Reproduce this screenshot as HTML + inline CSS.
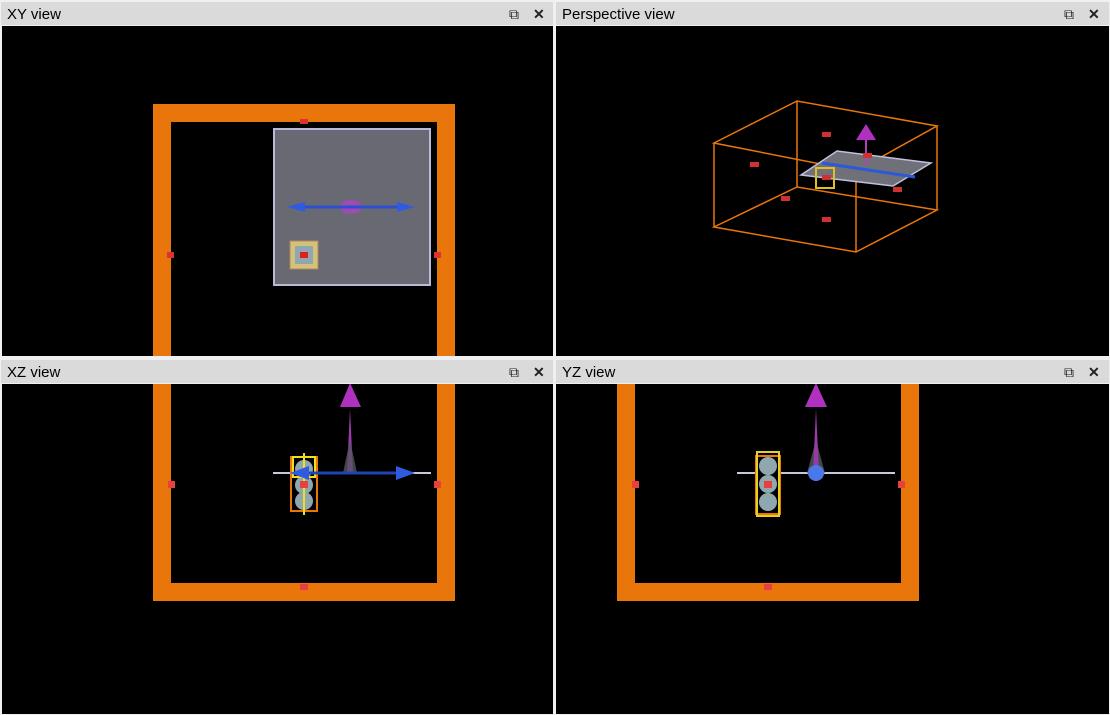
<!DOCTYPE html>
<html><head><style>
html,body{margin:0;padding:0;background:#f0f0f0;width:1110px;height:715px;overflow:hidden}
.t{position:absolute;height:24px;background:#dadada;font-family:"Liberation Sans",sans-serif;font-size:15px;line-height:25px;color:#000;padding-left:6px;box-sizing:border-box;border-top:1px solid #f0f0f0}
.i{position:absolute;top:0;font-size:14px;color:#222}
</style></head><body>
<div class="t" style="left:1px;top:1px;width:552px">XY view<span class="i" style="left:508px">&#x29C9;</span><span class="i" style="left:532px;font-weight:bold">✕</span></div>
<div class="t" style="left:556px;top:1px;width:553px">Perspective view<span class="i" style="left:508px">&#x29C9;</span><span class="i" style="left:532px;font-weight:bold">✕</span></div>
<div class="t" style="left:1px;top:359px;width:552px">XZ view<span class="i" style="left:508px">&#x29C9;</span><span class="i" style="left:532px;font-weight:bold">✕</span></div>
<div class="t" style="left:556px;top:359px;width:553px">YZ view<span class="i" style="left:508px">&#x29C9;</span><span class="i" style="left:532px;font-weight:bold">✕</span></div>
<svg style="position:absolute;left:0;top:0" width="1110" height="715">
<defs>
<clipPath id="c1"><rect x="2" y="26" width="551" height="330"/></clipPath>
<clipPath id="c2"><rect x="556" y="26" width="553" height="330"/></clipPath>
<clipPath id="c3"><rect x="2" y="384" width="551" height="330"/></clipPath>
<clipPath id="c4"><rect x="556" y="384" width="553" height="330"/></clipPath>
</defs>
<rect x="2" y="26" width="551" height="330" fill="#000"/>
<rect x="556" y="26" width="553" height="330" fill="#000"/>
<rect x="2" y="384" width="551" height="330" fill="#000"/>
<rect x="556" y="384" width="553" height="330" fill="#000"/>
<g clip-path="url(#c1)">
<path d="M153 400V104H455V400H437V122H171V400Z" fill="#e8760a"/>
<rect x="274" y="129" width="156" height="156" fill="#696974" stroke="#b9b9d8" stroke-width="2"/>
<ellipse cx="351" cy="207" rx="11" ry="7" fill="#a04bb0"/>
<line x1="295" y1="207" x2="405" y2="207" stroke="#2a4fd0" stroke-width="3"/>
<path d="M287 207l18-5v10zM415 207l-18-5v10z" fill="#2f5be0"/>
<rect x="290" y="241" width="28" height="28" fill="#d5c27a" stroke="#b0885a"/>
<rect x="295" y="246" width="18" height="18" fill="#8fa8b0"/>
<rect x="300" y="252" width="8" height="6" fill="#e02020"/>
<rect x="300" y="119" width="8" height="5" fill="#e03030"/>
<rect x="167" y="252" width="7" height="6" fill="#e03030"/>
<rect x="434" y="252" width="7" height="6" fill="#e03030"/>
</g>
<g clip-path="url(#c2)" fill="none" stroke="#e8760a" stroke-width="1.5">
<path d="M714 143L797 101L937 126L856 171ZM714 227L797 187L937 210L856 252ZM714 143V227M797 101V187M937 126V210M856 171V252"/>
<path d="M801 175L837 151L931 163L893 186Z" fill="#707078" stroke="#c0c0e0"/>
<line x1="822" y1="163" x2="915" y2="177" stroke="#2a5ad8" stroke-width="3"/>
<line x1="866" y1="140" x2="866" y2="165" stroke="#b040c0" stroke-width="2"/>
<path d="M856 140L866 124L876 140Z" fill="#b030c0" stroke="none"/>
<rect x="816" y="168" width="18" height="20" stroke="#e0c020" stroke-width="2"/>
<g fill="#d03030" stroke="none"><rect x="750" y="162" width="9" height="5"/><rect x="822" y="132" width="9" height="5"/><rect x="781" y="196" width="9" height="5"/><rect x="822" y="217" width="9" height="5"/><rect x="893" y="187" width="9" height="5"/><rect x="863" y="153" width="9" height="5"/><rect x="822" y="175" width="9" height="5"/></g>
</g>
<g clip-path="url(#c3)">
<path d="M153 370V601H455V370H437V583H171V370Z" fill="#e8760a"/>
<line x1="273" y1="473" x2="431" y2="473" stroke="#c8c8dc" stroke-width="2"/>
<path d="M347 473L350 408L353 473Z" fill="#9a3aa8"/>
<path d="M343 473L350 440L357 473Z" fill="#555560" opacity=".8"/>
<path d="M340 407L350 383L361 407Z" fill="#b030c0"/>
<rect x="291" y="457" width="26" height="54" fill="#000" stroke="#e8760a" stroke-width="2"/>
<circle cx="304" cy="469" r="9" fill="#8fa8b0"/><circle cx="304" cy="485" r="9" fill="#8fa8b0"/><circle cx="304" cy="501" r="9" fill="#8fa8b0"/>
<rect x="293" y="457" width="22" height="20" fill="none" stroke="#f0e020" stroke-width="2"/>
<line x1="304" y1="453" x2="304" y2="515" stroke="#f0e020" stroke-width="2"/>
<line x1="300" y1="473" x2="400" y2="473" stroke="#1f44b8" stroke-width="3"/>
<path d="M415 473l-19-7v14zM290 473l19-7v14z" fill="#2f5be0"/>
<g fill="#e84040"><rect x="300" y="481" width="8" height="7"/><rect x="168" y="481" width="7" height="7"/><rect x="434" y="481" width="7" height="7"/><rect x="300" y="584" width="8" height="6"/></g>
</g>
<g clip-path="url(#c4)">
<path d="M617 370V601H919V370H901V583H635V370Z" fill="#e8760a"/>
<line x1="737" y1="473" x2="895" y2="473" stroke="#c8c8dc" stroke-width="2"/>
<path d="M807 473L816 440L825 473Z" fill="#555560" opacity=".8"/>
<path d="M813 473L816 408L819 473Z" fill="#9a3aa8"/>
<path d="M805 407L816 383L827 407Z" fill="#b030c0"/>
<circle cx="816" cy="473" r="8" fill="#4a78e8"/>
<rect x="756" y="456" width="24" height="58" fill="#000" stroke="#e8760a" stroke-width="2"/>
<rect x="757" y="452" width="22" height="64" fill="none" stroke="#e8d020" stroke-width="2"/>
<circle cx="768" cy="466" r="9" fill="#8fa8b0"/><circle cx="768" cy="484" r="9" fill="#8fa8b0"/><circle cx="768" cy="502" r="9" fill="#8fa8b0"/>
<g fill="#e84040"><rect x="764" y="481" width="8" height="7"/><rect x="632" y="481" width="7" height="7"/><rect x="898" y="481" width="7" height="7"/><rect x="764" y="584" width="8" height="6"/></g>
</g>
</svg>
</body></html>
